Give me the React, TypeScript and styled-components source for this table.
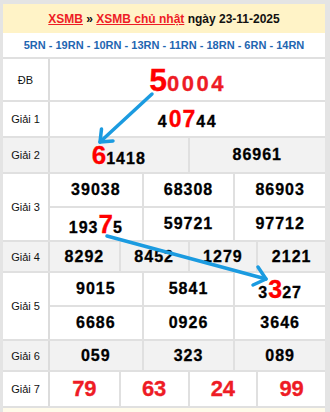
import React from "react";
import styled, { createGlobalStyle } from "styled-components";

const Global = createGlobalStyle`
  html, body { margin: 0; padding: 0; background: #e4e4e4; }
  body { font-family: "Liberation Sans", Arial, sans-serif; }
`;

const Page = styled.div`
  position: relative;
  width: 330px;
  height: 412px;
  box-sizing: border-box;
  padding: 4px 5px 0 3px;
  background: #e4e4e4;
  overflow: hidden;
`;

const Panel = styled.div`
  display: flex;
  flex-direction: column;
  background: #fff;
`;

const Header = styled.div`
  height: 29px;
  display: flex;
  align-items: center;
  justify-content: center;
  background: #fff3c7;
  font-size: 12px;
  font-weight: bold;
  color: #111;
  white-space: pre;
`;

const RedLink = styled.span`
  color: #ee1c25;
  text-decoration: underline;
`;

const CodeBar = styled.div`
  height: 24px;
  display: flex;
  align-items: center;
  justify-content: center;
  font-size: 11px;
  font-weight: bold;
  color: #1f66b1;
  border-bottom: 2px solid #e0e0e0;
  white-space: pre;
`;

const Row = styled.div<{ $h: number; $shade?: boolean }>`
  display: flex;
  height: ${(p) => p.$h}px;
  box-sizing: border-box;
  border-bottom: 2px solid #e0e0e0;
  background: ${(p) => (p.$shade ? "#f2f2f2" : "#fff")};
`;

const Label = styled.div`
  width: 45px;
  flex: none;
  display: flex;
  align-items: center;
  justify-content: center;
  border-right: 2px solid #dcdcdc;
  font-size: 11px;
  color: #111;
`;

const Data = styled.div`
  flex: 1;
  display: flex;
  flex-direction: column;
`;

const SubRow = styled.div<{ $cols: number }>`
  flex: 1;
  display: grid;
  grid-template-columns: repeat(${(p) => p.$cols}, 1fr);
  & + & {
    border-top: 2px solid #e0e0e0;
  }
`;

const Cell = styled.div`
  display: flex;
  align-items: center;
  justify-content: center;
  & + & {
    border-left: 2px solid #e0e0e0;
  }
`;

const Value = styled.span`
  line-height: 1;
  font-weight: bold;
  white-space: nowrap;
`;

const Num = styled.span<{ $size: number; $color?: string; $ls?: number }>`
  font-size: ${(p) => p.$size}px;
  color: ${(p) => p.$color ?? "#000"};
  letter-spacing: ${(p) => p.$ls ?? 1}px;
  -webkit-text-stroke: 0.3px ${(p) => p.$color ?? "#000"};
`;

const Footer = styled.div`
  height: 4px;
  background: #fffbea;
`;

const Overlay = styled.svg`
  position: absolute;
  left: 0;
  top: 0;
  pointer-events: none;
`;

const RED = "#ee1c25";
const HOT = "#ff0000";

const Plain = ({ v }: { v: string }) => (
  <Value>
    <Num $size={16}>{v}</Num>
  </Value>
);

const Red7 = ({ v }: { v: string }) => (
  <Value>
    <Num $size={22} $color={RED} $ls={0}>
      {v}
    </Num>
  </Value>
);

export default function App() {
  return (
    <>
      <Global />
      <Page>
        <Panel>
          <Header>
            <RedLink>XSMB</RedLink>
            {" » "}
            <RedLink>XSMB chủ nhật</RedLink>
            {" ngày 23-11-2025"}
          </Header>
          <CodeBar>5RN - 19RN - 10RN - 13RN - 11RN - 18RN - 6RN - 14RN</CodeBar>

          <Row $h={43}>
            <Label>ĐB</Label>
            <Data>
              <SubRow $cols={1}>
                <Cell>
                  <Value>
                    <Num $size={32} $color={HOT} $ls={0}>5</Num>
                    <Num $size={22} $color={RED} $ls={2.5}>0004</Num>
                  </Value>
                </Cell>
              </SubRow>
            </Data>
          </Row>

          <Row $h={36}>
            <Label>Giải 1</Label>
            <Data>
              <SubRow $cols={1}>
                <Cell>
                  <Value>
                    <Num $size={16} $ls={2}>4</Num>
                    <Num $size={23} $color={HOT} $ls={1}>07</Num>
                    <Num $size={16} $ls={1.5}>44</Num>
                  </Value>
                </Cell>
              </SubRow>
            </Data>
          </Row>

          <Row $h={36} $shade>
            <Label>Giải 2</Label>
            <Data>
              <SubRow $cols={2}>
                <Cell>
                  <Value>
                    <Num $size={26} $color={HOT} $ls={0}>6</Num>
                    <Num $size={16}>1418</Num>
                  </Value>
                </Cell>
                <Cell>
                  <Plain v="86961" />
                </Cell>
              </SubRow>
            </Data>
          </Row>

          <Row $h={68}>
            <Label>Giải 3</Label>
            <Data>
              <SubRow $cols={3}>
                <Cell><Plain v="39038" /></Cell>
                <Cell><Plain v="68308" /></Cell>
                <Cell><Plain v="86903" /></Cell>
              </SubRow>
              <SubRow $cols={3}>
                <Cell>
                  <Value>
                    <Num $size={16}>193</Num>
                    <Num $size={26} $color={HOT} $ls={0}>7</Num>
                    <Num $size={16}>5</Num>
                  </Value>
                </Cell>
                <Cell><Plain v="59721" /></Cell>
                <Cell><Plain v="97712" /></Cell>
              </SubRow>
            </Data>
          </Row>

          <Row $h={31} $shade>
            <Label>Giải 4</Label>
            <Data>
              <SubRow $cols={4}>
                <Cell><Plain v="8292" /></Cell>
                <Cell><Plain v="8452" /></Cell>
                <Cell><Plain v="1279" /></Cell>
                <Cell><Plain v="2121" /></Cell>
              </SubRow>
            </Data>
          </Row>

          <Row $h={68}>
            <Label>Giải 5</Label>
            <Data>
              <SubRow $cols={3}>
                <Cell><Plain v="9015" /></Cell>
                <Cell><Plain v="5841" /></Cell>
                <Cell>
                  <Value>
                    <Num $size={16}>3</Num>
                    <Num $size={25} $color={HOT} $ls={0}>3</Num>
                    <Num $size={16}>27</Num>
                  </Value>
                </Cell>
              </SubRow>
              <SubRow $cols={3}>
                <Cell><Plain v="6686" /></Cell>
                <Cell><Plain v="0926" /></Cell>
                <Cell><Plain v="3646" /></Cell>
              </SubRow>
            </Data>
          </Row>

          <Row $h={31} $shade>
            <Label>Giải 6</Label>
            <Data>
              <SubRow $cols={3}>
                <Cell><Plain v="059" /></Cell>
                <Cell><Plain v="323" /></Cell>
                <Cell><Plain v="089" /></Cell>
              </SubRow>
            </Data>
          </Row>

          <Row $h={36}>
            <Label>Giải 7</Label>
            <Data>
              <SubRow $cols={4}>
                <Cell><Red7 v="79" /></Cell>
                <Cell><Red7 v="63" /></Cell>
                <Cell><Red7 v="24" /></Cell>
                <Cell><Red7 v="99" /></Cell>
              </SubRow>
            </Data>
          </Row>
          <Footer />
        </Panel>

        <Overlay width="330" height="412" viewBox="0 0 330 412">
          <g stroke="#1b9be0" strokeWidth="3.5" fill="none" strokeLinecap="round" strokeLinejoin="round">
            <line x1="152" y1="94" x2="100" y2="142" />
            <polyline points="113,141 100,142 101.5,129" />
            <line x1="107" y1="236" x2="266" y2="279" />
            <polyline points="258,267 266,279 253,285" />
          </g>
        </Overlay>
      </Page>
    </>
  );
}
